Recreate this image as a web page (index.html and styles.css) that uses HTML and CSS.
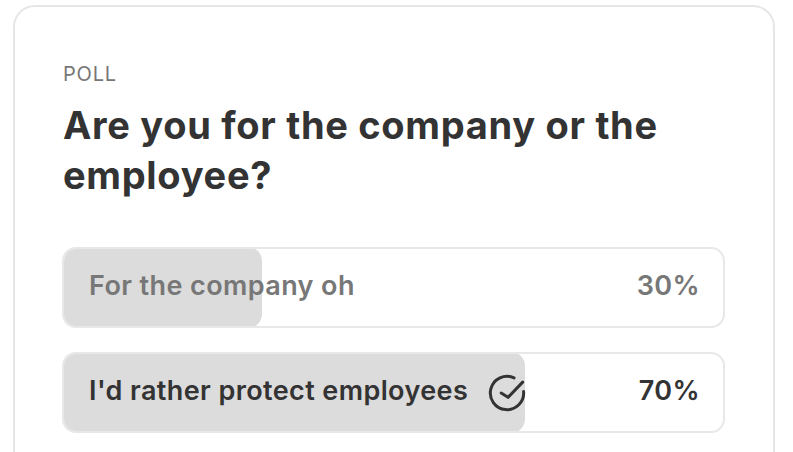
FILE: index.html
```html
<!DOCTYPE html>
<html>
<head>
<meta charset="utf-8">
<link rel="stylesheet" href="styles.css">
</head>
<body>
<div class="card">
  <div class="label">POLL</div>
  <h1 class="title">Are you for the company or the employee?</h1>
  <div class="options">
    <div class="option">
      <div class="fill" style="width:calc(30% + 2px)"></div>
      <span class="opt-text">For the company oh</span>
      <span class="pct">30%</span>
    </div>
    <div class="option chosen">
      <div class="fill" style="width:calc(70% + 2px)"></div>
      <span class="opt-text">I'd rather protect employees
        <svg class="check" viewBox="0 0 24 24" width="40" height="40" fill="none" stroke="#333" stroke-width="1.8" stroke-linecap="round" stroke-linejoin="round">
          <path d="M21.96 11.13A10 10 0 1 1 16.23 2.94"/>
          <polyline points="8.5 12 12.6 14.6 21.4 5.5"/>
        </svg>
      </span>
      <span class="pct">70%</span>
    </div>
  </div>
</div>
</body>
</html>
```

FILE: styles.css
```css
html, body {
  margin: 0;
  padding: 0;
  background: #ffffff;
}
body {
  font-family: "Inter", "Liberation Sans", sans-serif;
  overflow: hidden;
  height: 452px;
}
.card {
  margin: 5px 0 0 13px;
  width: 762px;
  box-sizing: border-box;
  border: 2px solid #e6e6e6;
  border-radius: 22px;
  padding: 55px 48px 60px 47px;
  min-height: 520px;
}
.label {
  font-size: 20px;
  line-height: 24px;
  color: #777;
  letter-spacing: 0.8px;
  margin-left: 1px;
}
.title {
  margin: 14px 0 0 1px;
  font-size: 38px;
  line-height: 50px;
  font-weight: 700;
  color: #333;
  letter-spacing: 0.7px;
}
.options {
  margin-top: 47px;
  display: flex;
  flex-direction: column;
  gap: 24px;
}
.option {
  position: relative;
  height: 81px;
  box-sizing: border-box;
  border: 2px solid #e8e8e8;
  border-radius: 14px;
  display: flex;
  align-items: center;
  justify-content: space-between;
  padding: 0 23px 4px 25px;
  overflow: hidden;
  color: #777;
  font-size: 27px;
  font-weight: 600;
  letter-spacing: 0.4px;
}
.option.chosen {
  color: #333;
}
.fill {
  position: absolute;
  left: -2px;
  top: -2px;
  bottom: -2px;
  background: #dcdcdc;
  border-radius: 14px;
}
.opt-text, .pct {
  position: relative;
  display: flex;
  align-items: center;
  gap: 19px;
}
.check {
  display: block;
  margin-top: 4px;
}
```
